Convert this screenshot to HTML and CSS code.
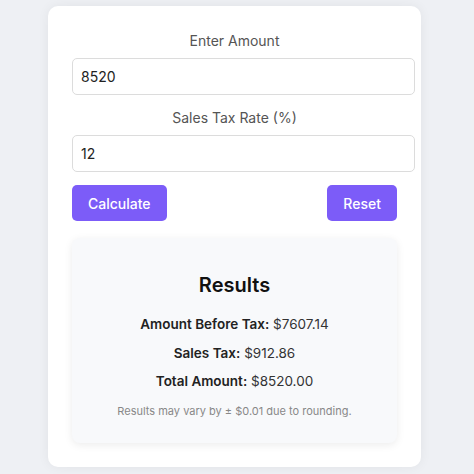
FILE: index.html
```html
<!DOCTYPE html>
<html lang="en">
<head>
    <meta charset="UTF-8">
    <meta name="viewport" content="width=device-width, initial-scale=1.0">
    <title>Sales Tax Calculator</title>
    <link rel="stylesheet" href="styles.css">
</head>
<body>
    <div class="calculator">
        <label class="field-label" for="amount">Enter Amount</label>
        <input class="field-input" type="text" id="amount" value="8520">

        <label class="field-label" for="rate">Sales Tax Rate (%)</label>
        <input class="field-input" type="text" id="rate" value="12">

        <div class="actions">
            <button class="btn">Calculate</button>
            <button class="btn">Reset</button>
        </div>

        <div class="results">
            <h2>Results</h2>
            <p class="result-line"><strong>Amount Before Tax:</strong> $7607.14</p>
            <p class="result-line"><strong>Sales Tax:</strong> $912.86</p>
            <p class="result-line"><strong>Total Amount:</strong> $8520.00</p>
            <p class="note">Results may vary by ± $0.01 due to rounding.</p>
        </div>
    </div>
</body>
</html>
```

FILE: styles.css
```css
* {
    margin: 0;
    padding: 0;
}

body {
    background: #eef0f4;
    font-family: Inter, "Open Sans", sans-serif;
    display: flex;
    justify-content: center;
    align-items: flex-start;
    padding-top: 6px;
    height: 474px;
    box-sizing: border-box;
    overflow: hidden;
}

.calculator {
    width: 325px;
    padding: 24px;
    background: #fff;
    border-radius: 10px;
    box-shadow: 0 0 12px rgba(0, 0, 0, 0.06);
    margin-left: -5px;
}

.field-label {
    display: block;
    text-align: center;
    color: #555;
    font-size: 14px;
    line-height: 21px;
    margin-bottom: 7px;
}

.field-input {
    display: block;
    width: 100%;
    height: 35px;
    padding: 0 8px;
    border: 1px solid #dcdcdc;
    border-radius: 5px;
    font-family: inherit;
    font-size: 14px;
    color: #222;
    margin-bottom: 12px;
}

.actions {
    display: flex;
    justify-content: space-between;
    margin-top: 13px;
}

.btn {
    background: #7c5cf8;
    color: #fff;
    border: none;
    border-radius: 5px;
    height: 36px;
    padding: 0 16px;
    font-family: inherit;
    font-size: 14px;
    font-weight: 500;
    cursor: pointer;
}

.results {
    margin-top: 17px;
    background: #f8f9fb;
    border-radius: 8px;
    box-shadow: 0 2px 8px rgba(0, 0, 0, 0.08);
    padding: 35px 10px 24px;
    text-align: center;
    color: #333;
}

.results h2 {
    font-size: 20px;
    font-weight: 600;
    color: #111;
    line-height: 24px;
    margin-bottom: 17px;
}

.result-line {
    font-size: 13.5px;
    line-height: 20px;
    margin-bottom: 8.5px;
}

.result-line strong {
    font-weight: 600;
    color: #222;
}

.note {
    font-size: 11px;
    color: #888;
    line-height: 16px;
    margin-top: 12px;
}
```
